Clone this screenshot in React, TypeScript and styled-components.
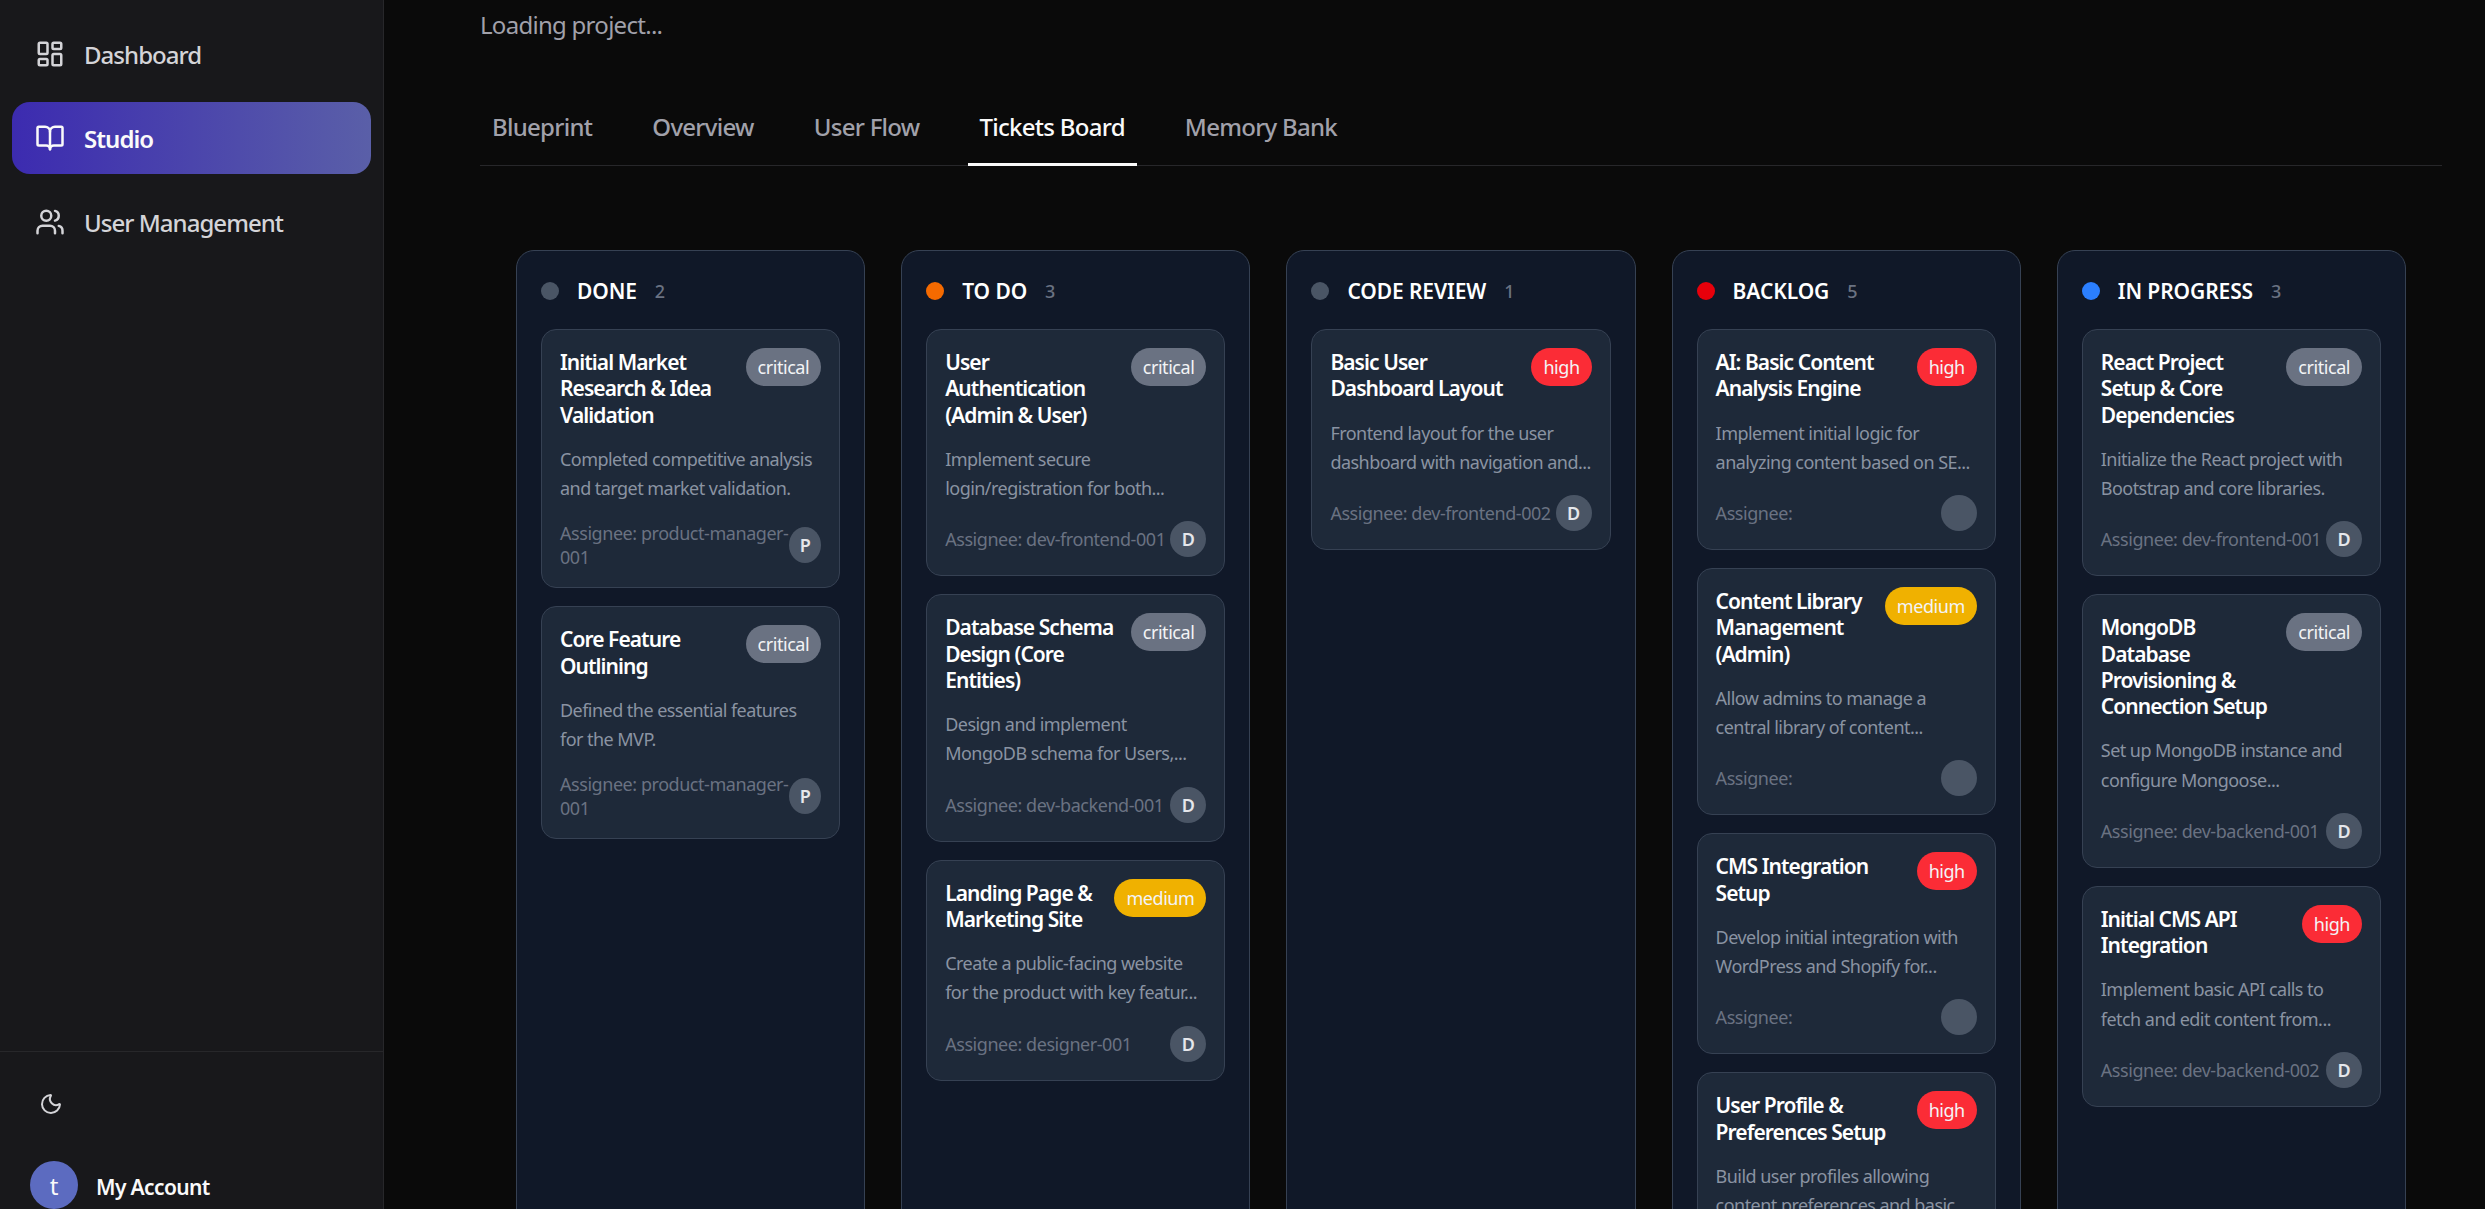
import { FC } from "react";
import styled, { createGlobalStyle } from "styled-components";
import { BookOpen, LayoutDashboard, Moon, Users } from "lucide-react";

type Priority = "critical" | "high" | "medium";

interface Ticket {
  title: string;
  description: string;
  priority: Priority;
  assignee?: string;
  initial?: string;
}

interface BoardColumn {
  name: string;
  color: string;
  count: number;
  tickets: Ticket[];
}

const columns: BoardColumn[] = [
  {
    name: "DONE",
    color: "#4a5565",
    count: 2,
    tickets: [
      {
        title: "Initial Market\nResearch & Idea\nValidation",
        description: "Completed competitive analysis\nand target market validation.",
        priority: "critical",
        assignee: "product-manager-001",
        initial: "P",
      },
      {
        title: "Core Feature\nOutlining",
        description: "Defined the essential features\nfor the MVP.",
        priority: "critical",
        assignee: "product-manager-001",
        initial: "P",
      },
    ],
  },
  {
    name: "TO DO",
    color: "#f56a00",
    count: 3,
    tickets: [
      {
        title: "User\nAuthentication\n(Admin & User)",
        description: "Implement secure\nlogin/registration for both...",
        priority: "critical",
        assignee: "dev-frontend-001",
        initial: "D",
      },
      {
        title: "Database Schema\nDesign (Core\nEntities)",
        description: "Design and implement\nMongoDB schema for Users,...",
        priority: "critical",
        assignee: "dev-backend-001",
        initial: "D",
      },
      {
        title: "Landing Page &\nMarketing Site",
        description: "Create a public-facing website\nfor the product with key featur...",
        priority: "medium",
        assignee: "designer-001",
        initial: "D",
      },
    ],
  },
  {
    name: "CODE REVIEW",
    color: "#4a5565",
    count: 1,
    tickets: [
      {
        title: "Basic User\nDashboard Layout",
        description: "Frontend layout for the user\ndashboard with navigation and...",
        priority: "high",
        assignee: "dev-frontend-002",
        initial: "D",
      },
    ],
  },
  {
    name: "BACKLOG",
    color: "#e7000b",
    count: 5,
    tickets: [
      {
        title: "AI: Basic Content\nAnalysis Engine",
        description: "Implement initial logic for\nanalyzing content based on SE...",
        priority: "high",
      },
      {
        title: "Content Library\nManagement\n(Admin)",
        description: "Allow admins to manage a\ncentral library of content...",
        priority: "medium",
      },
      {
        title: "CMS Integration\nSetup",
        description: "Develop initial integration with\nWordPress and Shopify for...",
        priority: "high",
      },
      {
        title: "User Profile &\nPreferences Setup",
        description: "Build user profiles allowing\ncontent preferences and basic...",
        priority: "high",
      },
    ],
  },
  {
    name: "IN PROGRESS",
    color: "#2b7fff",
    count: 3,
    tickets: [
      {
        title: "React Project\nSetup & Core\nDependencies",
        description: "Initialize the React project with\nBootstrap and core libraries.",
        priority: "critical",
        assignee: "dev-frontend-001",
        initial: "D",
      },
      {
        title: "MongoDB\nDatabase\nProvisioning &\nConnection Setup",
        description: "Set up MongoDB instance and\nconfigure Mongoose...",
        priority: "critical",
        assignee: "dev-backend-001",
        initial: "D",
      },
      {
        title: "Initial CMS API\nIntegration",
        description: "Implement basic API calls to\nfetch and edit content from...",
        priority: "high",
        assignee: "dev-backend-002",
        initial: "D",
      },
    ],
  },
];

const tabs = ["Blueprint", "Overview", "User Flow", "Tickets Board", "Memory Bank"];

const App: FC = () => {
  return (
    <>
      <GlobalStyle />
      <Layout>
        <Sidebar>
          <Nav>
            <NavItem>
              <LayoutDashboard size={30} />
              Dashboard
            </NavItem>
            <NavItem $active>
              <BookOpen size={30} />
              Studio
            </NavItem>
            <NavItem>
              <Users size={30} />
              User Management
            </NavItem>
          </Nav>
          <SidebarFooter>
            <ThemeToggle>
              <Moon size={24} />
            </ThemeToggle>
            <Account>
              <AccountAvatar>t</AccountAvatar>
              <AccountName>My Account</AccountName>
            </Account>
          </SidebarFooter>
        </Sidebar>
        <Main>
          <Loading>Loading project...</Loading>
          <Tabs>
            {tabs.map((tab) => (
              <Tab key={tab} $active={tab === "Tickets Board"}>
                {tab}
              </Tab>
            ))}
          </Tabs>
          <Board>
            {columns.map((column) => (
              <Column key={column.name}>
                <ColumnHeader>
                  <StatusDot $color={column.color} />
                  <ColumnName>{column.name}</ColumnName>
                  <ColumnCount>{column.count}</ColumnCount>
                </ColumnHeader>
                <CardList>
                  {column.tickets.map((ticket) => (
                    <Card key={ticket.title}>
                      <CardTop>
                        <CardTitle>{ticket.title}</CardTitle>
                        <Badge $priority={ticket.priority}>{ticket.priority}</Badge>
                      </CardTop>
                      <CardDescription>{ticket.description}</CardDescription>
                      <CardFooter>
                        <Assignee>{`Assignee: ${ticket.assignee ?? ""}`}</Assignee>
                        <AssigneeAvatar>{ticket.initial}</AssigneeAvatar>
                      </CardFooter>
                    </Card>
                  ))}
                </CardList>
              </Column>
            ))}
          </Board>
        </Main>
      </Layout>
    </>
  );
};

const priorityColors: Record<Priority, string> = {
  critical: "#6a7282",
  high: "#fb2c36",
  medium: "#f0b100",
};

const GlobalStyle = createGlobalStyle`
  html,
  body {
    margin: 0;
    height: 100%;
    overflow: hidden;
    background: #0a0a0a;
    font-family: "Noto Sans", "Open Sans", sans-serif;
  }

  * {
    box-sizing: border-box;
  }
`;

const Layout = styled.div`
  display: flex;
  height: 100vh;
  overflow: hidden;
`;

const Sidebar = styled.aside`
  width: 384px;
  flex-shrink: 0;
  display: flex;
  flex-direction: column;
  justify-content: space-between;
  background: #18181b;
  border-right: 1px solid #27272a;
`;

const Nav = styled.nav`
  display: flex;
  flex-direction: column;
  gap: 12px;
  padding: 18px 12px;
`;

const NavItem = styled.a<{ $active?: boolean }>`
  display: flex;
  align-items: center;
  gap: 19px;
  height: 72px;
  padding-left: 23px;
  border-radius: 18px;
  font-size: 24px;
  letter-spacing: -0.04em;
  font-weight: ${({ $active }) => ($active ? 600 : 500)};
  color: ${({ $active }) => ($active ? "#fafafa" : "#d4d4d8")};
  background: ${({ $active }) => ($active ? "linear-gradient(90deg, #3c2bb0, #5a5fa8)" : "none")};
`;

const SidebarFooter = styled.div`
  border-top: 1px solid #27272a;
  height: 158px;
  padding: 40px 30px 0;
`;

const ThemeToggle = styled.div`
  display: flex;
  height: 24px;
  padding-left: 9px;
  color: #d4d4d8;
`;

const Account = styled.div`
  display: flex;
  align-items: center;
  gap: 18px;
  margin-top: 45px;
`;

const AccountAvatar = styled.div`
  width: 48px;
  height: 48px;
  border-radius: 50%;
  display: flex;
  align-items: center;
  justify-content: center;
  background: #5c6bc0;
  color: #fafafa;
  font-size: 24px;
`;

const AccountName = styled.span`
  font-size: 21px;
  font-weight: 600;
  letter-spacing: -0.03em;
  color: #fafafa;
  padding-top: 4px;
`;

const Main = styled.main`
  flex: 1;
  min-width: 0;
  padding: 7px 43px 0 96px;
`;

const Loading = styled.div`
  font-size: 24px;
  line-height: 36px;
  letter-spacing: -0.03em;
  color: #a1a1aa;
`;

const Tabs = styled.div`
  display: flex;
  gap: 36px;
  margin-top: 66px;
  border-bottom: 1px solid #27272a;
`;

const Tab = styled.div<{ $active?: boolean }>`
  padding: 0 12px 18px;
  font-size: 24px;
  line-height: 36px;
  letter-spacing: -0.03em;
  font-weight: 500;
  color: ${({ $active }) => ($active ? "#fafafa" : "#a1a1aa")};
  border-bottom: 3px solid ${({ $active }) => ($active ? "#fafafa" : "transparent")};
  margin-bottom: -1px;
`;

const Board = styled.div`
  display: grid;
  grid-template-columns: repeat(5, minmax(0, 1fr));
  gap: 36px;
  margin-top: 84px;
  padding: 0 36px;
`;

const Column = styled.section`
  min-height: 1200px;
  padding: 24px;
  background: #101828;
  border: 1px solid #364153;
  border-radius: 18px;
`;

const ColumnHeader = styled.header`
  display: flex;
  align-items: center;
  gap: 18px;
  height: 31px;
  margin-bottom: 23px;
`;

const StatusDot = styled.span<{ $color: string }>`
  width: 18px;
  height: 18px;
  border-radius: 50%;
  background: ${({ $color }) => $color};
`;

const ColumnName = styled.h3`
  margin: 0;
  font-size: 21px;
  font-weight: 600;
  letter-spacing: -0.005em;
  color: #fff;
`;

const ColumnCount = styled.span`
  font-size: 18px;
  font-weight: 500;
  color: #6a7282;
`;

const CardList = styled.div`
  display: flex;
  flex-direction: column;
  gap: 18px;
`;

const Card = styled.article`
  padding: 18px;
  background: #1e2939;
  border: 1px solid #364153;
  border-radius: 15px;
`;

const CardTop = styled.div`
  display: flex;
  justify-content: space-between;
  align-items: flex-start;
  gap: 12px;
`;

const CardTitle = styled.h4`
  margin: 1px 0 -1px;
  font-size: 21px;
  line-height: 26.25px;
  font-weight: 600;
  letter-spacing: -0.045em;
  color: #fff;
  white-space: pre;
`;

const Badge = styled.span<{ $priority: Priority }>`
  flex-shrink: 0;
  height: 38px;
  padding: 0 12px;
  border-radius: 19px;
  font-size: 18px;
  line-height: 38px;
  letter-spacing: -0.025em;
  color: #f3f4f6;
  background: ${({ $priority }) => priorityColors[$priority]};
`;

const CardDescription = styled.p`
  margin: 18px 0;
  font-size: 18px;
  line-height: 29.25px;
  letter-spacing: -0.03em;
  color: #8a93a2;
  white-space: pre;
`;

const CardFooter = styled.div`
  display: flex;
  justify-content: space-between;
  align-items: center;
`;

const Assignee = styled.span`
  font-size: 18px;
  line-height: 24px;
  letter-spacing: -0.025em;
  color: #6a7282;
`;

const AssigneeAvatar = styled.span`
  width: 36px;
  height: 36px;
  border-radius: 50%;
  display: flex;
  align-items: center;
  justify-content: center;
  background: #4a5565;
  color: #e5e7eb;
  font-size: 18px;
  font-weight: 600;
`;

export default App;
